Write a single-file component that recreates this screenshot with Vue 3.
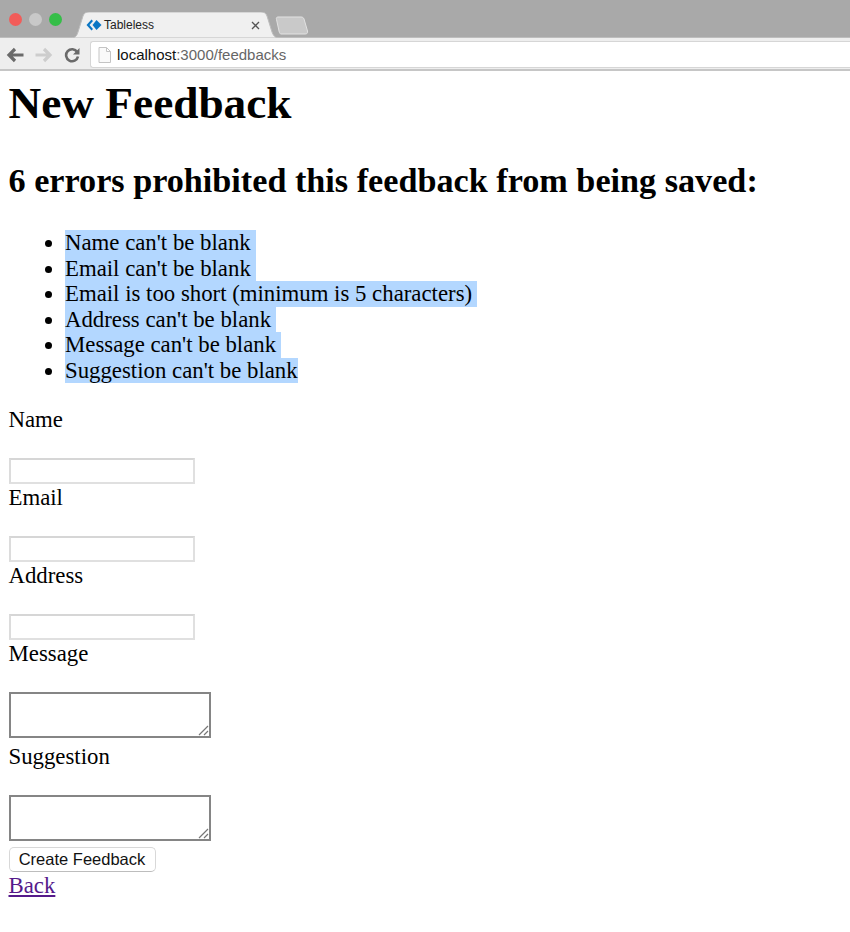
<template>
  <div class="browser">
    <div class="tabstrip">
      <div class="lights">
        <span class="light red"></span>
        <span class="light grey"></span>
        <span class="light green"></span>
      </div>
      <div class="tab">
        <svg class="tab-shape" width="208" height="26" viewBox="0 0 208 26">
          <path d="M0 26 C5 26 6 23 7 20 L12 4 C13 1 15 0 18 0 H190 C193 0 195 1 196 4 L201 20 C202 23 204 26 208 26 Z" fill="#f0f0f0" stroke="#bdbdbd" />
        </svg>
        <svg class="favicon" width="16" height="12" viewBox="0 0 16 12">
          <path d="M5.500 0.500 L0.500 6 L5.500 11.500 L7 10 L3.500 6 L7 2 Z" fill="#0a76c4" />
          <path d="M10.500 1 L15.500 6 L10.500 11 L6.500 6 Z" fill="#0a76c4" />
        </svg>
        <span class="tab-title">Tableless</span>
        <svg class="tab-close" width="9" height="9" viewBox="0 0 9 9">
          <path d="M1 1 L8 8 M8 1 L1 8" stroke="#555" stroke-width="1.300" />
        </svg>
      </div>
      <svg class="new-tab" width="34" height="19" viewBox="0 0 34 19">
        <path d="M6 18 H30 C32 18 33 17 32.500 15 L29 3 C28.500 1.500 27.500 1 26 1 H3 C1.500 1 1 2 1.500 3.500 L4 15 C4.500 17 5 18 6 18 Z" fill="#c9c9c9" stroke="#e2e2e2" />
      </svg>
    </div>

    <div class="toolbar">
      <svg class="nav-icon" width="19" height="16" viewBox="0 0 19 16">
        <path d="M17.500 8 H4 M9 2 L3 8 L9 14" fill="none" stroke="#6a6a6a" stroke-width="3.200" />
      </svg>
      <svg class="nav-icon" width="19" height="16" viewBox="0 0 19 16">
        <path d="M1.500 8 H15 M10 2 L16 8 L10 14" fill="none" stroke="#cdcdcd" stroke-width="3.200" />
      </svg>
      <svg class="nav-icon reload" width="16" height="16" viewBox="0 0 16 16">
        <path d="M13.200 5 A6 6 0 1 0 14 9.500" fill="none" stroke="#6a6a6a" stroke-width="2.600" />
        <path d="M15.500 1 V7.500 H9 Z" fill="#6a6a6a" />
      </svg>
      <div class="omnibox">
        <svg class="page-icon" width="13" height="16" viewBox="0 0 13 16">
          <path d="M1 .5 H8.500 L12.500 4.500 V15.500 H1 Z M8.500 .5 V4.500 H12.500" fill="#fafafa" stroke="#c4c4c4" />
        </svg>
        <span class="url">localhost<span class="url-rest">:3000/feedbacks</span></span>
      </div>
    </div>

    <div class="page">
      <h1>New Feedback</h1>
      <h2>{{ errors.length }} errors prohibited this feedback from being saved:</h2>
      <ul>
        <li v-for="error in errors" :key="error"><span class="selected">{{ error }}</span></li>
      </ul>

      <form @submit.prevent>
        <template v-for="field in fields" :key="field.label">
          <label :for="field.label">{{ field.label }}</label>
          <div v-if="field.multiline" class="area-wrap">
            <textarea :id="field.label"></textarea>
            <svg class="grip" width="11" height="11" viewBox="0 0 11 11">
              <path d="M1 10 L10 1 M6 10 L10 6" stroke="#777" stroke-width="1.200" />
            </svg>
          </div>
          <input v-else :id="field.label" type="text" />
        </template>
        <button type="submit">Create Feedback</button>
      </form>
      <a href="#" class="back">Back</a>
    </div>
  </div>
</template>

<script setup>
const errors = [
  "Name can't be blank",
  "Email can't be blank",
  'Email is too short (minimum is 5 characters)',
  "Address can't be blank",
  "Message can't be blank",
  "Suggestion can't be blank"
];

const fields = [
  { label: 'Name' },
  { label: 'Email' },
  { label: 'Address' },
  { label: 'Message', multiline: true },
  { label: 'Suggestion', multiline: true }
];
</script>

<style>
html,
body {
  background: #fff;
}
</style>

<style scoped>
.browser {
  width: 850px;
  font-family: 'Liberation Serif', serif;
  color: #000;
}

.tabstrip {
  height: 37px;
  box-sizing: border-box;
  padding: 12px 0 0 9px;
  background: #a9a9a9;
  display: flex;
  align-items: flex-start;
}

.lights {
  display: flex;
  gap: 7px;
  margin-top: 1px;
}

.light {
  width: 13px;
  height: 13px;
  border-radius: 50%;
}

.red { background: #f25c59; }
.grey { background: #c8c8c8; }
.green { background: #35be48; }

.tab {
  position: relative;
  width: 208px;
  height: 26px;
  margin-left: 9px;
  box-sizing: border-box;
  padding: 0 19px 0 15px;
  display: flex;
  align-items: center;
}

.tab-shape {
  position: absolute;
  left: 0;
  top: 0;
}

.favicon,
.tab-title,
.tab-close {
  position: relative;
}

.tab-title {
  margin-left: 2px;
  font: 12px 'Liberation Sans', sans-serif;
  color: #222;
}

.tab-close {
  margin-left: auto;
}

.new-tab {
  margin: 4px 0 0 -4px;
}

.toolbar {
  height: 34px;
  box-sizing: border-box;
  padding: 4px 0 2px 6px;
  display: flex;
  align-items: center;
  background: #eeeeee;
  border-top: 1px solid #bdbdbd;
  border-bottom: 2px solid #c6c6c6;
}

.nav-icon {
  margin-right: 9px;
}

.reload {
  margin-right: 10px;
  margin-left: 2px;
}

.omnibox {
  flex: 1;
  height: 27px;
  box-sizing: border-box;
  padding-left: 7px;
  display: flex;
  align-items: center;
  background: #fff;
  border: 1px solid #d6d6d6;
  border-right: 0;
  border-radius: 3px 0 0 3px;
}

.url {
  margin-left: 6px;
  font: 15px 'Liberation Sans', sans-serif;
  color: #111;
}

.url-rest {
  color: #666;
}

.page {
  padding: 7px 8.500px 0;
  font-size: 22.800px;
  line-height: 25.500px;
}

h1 {
  margin: 0;
  font-size: 45.300px;
  line-height: 51px;
}

h2 {
  margin: 33px 0 0;
  font-size: 34.200px;
  line-height: 38px;
}

ul {
  margin: 30px 0 0;
  padding-left: 56.500px;
}

.selected {
  display: inline-block;
  padding-right: 5px;
  background: #b3d7ff;
}

li:last-child .selected {
  padding-right: 0;
}

form {
  margin-top: 23px;
  display: flex;
  flex-direction: column;
  align-items: flex-start;
}

label {
  padding-top: 0.500px;
  margin-bottom: 26px;
}

input {
  width: 186px;
  height: 26px;
  box-sizing: border-box;
  margin: 0;
  padding: 0;
  background: #fff;
  border: 2px solid #e0e0e0;
  border-top-color: #d6d6d6;
  border-left-color: #dcdcdc;
  border-radius: 0;
  outline: 0;
}

.area-wrap {
  position: relative;
  display: flex;
  margin-bottom: 5px;
}

textarea {
  width: 202px;
  height: 46px;
  box-sizing: border-box;
  margin: 0;
  padding: 0;
  background: #fff;
  border: 2px solid #858585;
  border-radius: 0;
  outline: 0;
  resize: none;
}

.grip {
  position: absolute;
  right: 2px;
  bottom: 2px;
}

button {
  width: 147px;
  height: 25px;
  margin-top: 1px;
  padding: 0;
  background: #fff;
  border: 1px solid #d8d8d8;
  border-bottom-color: #bdbdbd;
  border-radius: 5px;
  font: 16.500px 'Liberation Sans', sans-serif;
  color: #111;
}

.back {
  display: inline-block;
  margin-top: 1px;
  color: #551a8b;
}
</style>
